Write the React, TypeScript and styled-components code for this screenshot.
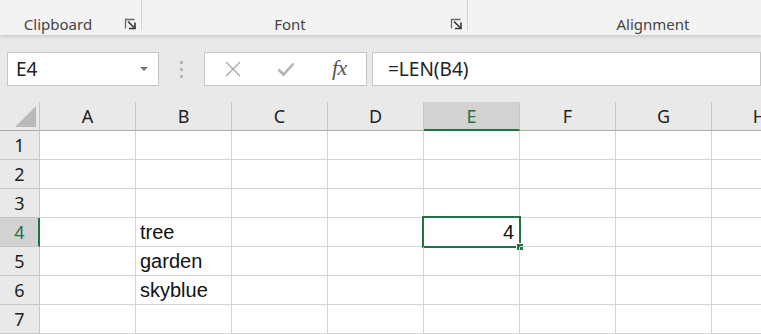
import React from "react";
import styled, { createGlobalStyle } from "styled-components";

const GlobalStyle = createGlobalStyle`
  html, body {
    margin: 0;
    padding: 0;
    background: #ffffff;
    overflow: hidden;
  }
  body {
    font-family: "Noto Sans", "Open Sans", sans-serif;
  }
`;

const green = "#217346";

const Page = styled.div`
  width: 761px;
  height: 334px;
  overflow: hidden;
  display: flex;
  flex-direction: column;
  background: #e9e9e9;
`;

const Ribbon = styled.div`
  height: 35px;
  flex: none;
  display: flex;
  background: #f3f3f3;
  box-shadow: 0 1px 4px rgba(0, 0, 0, 0.18);
  position: relative;
  z-index: 1;
`;

const Group = styled.div<{ $w: number; $pad?: number }>`
  width: ${(p) => p.$w}px;
  flex: none;
  display: flex;
  align-items: flex-start;
  justify-content: center;
  padding: 14px ${(p) => p.$pad ?? 0}px 0 0;
  box-sizing: border-box;
  height: 35px;
  position: relative;
  &::after {
    content: "";
    position: absolute;
    right: 0;
    top: 0;
    width: 1px;
    height: 30px;
    background: #d2d2d2;
  }
  &:last-child::after {
    display: none;
  }
`;

const GroupLabel = styled.span`
  font-size: 15px;
  color: #444;
  line-height: 20px;
`;

const Launcher = styled.span`
  position: absolute;
  right: 5px;
  top: 18px;
  width: 13px;
  height: 12px;
  display: flex;
`;

const FormulaArea = styled.div`
  height: 67px;
  flex: none;
  box-sizing: border-box;
  padding: 17px 0 0 7px;
  display: flex;
  align-items: flex-start;
  background: #e9e9e9;
`;

const Box = styled.div<{ $w?: number }>`
  height: 34px;
  box-sizing: border-box;
  background: #fff;
  border: 1px solid #c6c6c6;
  display: flex;
  align-items: center;
  ${(p) => (p.$w ? `width: ${p.$w}px; flex: none;` : "flex: 1;")}
`;

const NameText = styled.span`
  flex: 1;
  padding-left: 8px;
  font-size: 19px;
  color: #222;
`;

const Caret = styled.span`
  width: 0;
  height: 0;
  border-left: 4px solid transparent;
  border-right: 4px solid transparent;
  border-top: 4px solid #777;
  margin-right: 10px;
`;

const Dots = styled.div`
  width: 45px;
  flex: none;
  height: 34px;
  display: flex;
  flex-direction: column;
  align-items: center;
  justify-content: center;
  gap: 4px;
`;

const Dot = styled.span`
  width: 3px;
  height: 3px;
  background: #b8b8b8;
`;

const IconSlot = styled.span<{ $shift?: number }>`
  width: 54px;
  display: flex;
  justify-content: center;
  align-items: center;
  margin-left: ${(p) => p.$shift ?? 0}px;
`;

const Fx = styled.span`
  font-family: "Liberation Serif", "DejaVu Serif", serif;
  font-style: italic;
  font-size: 22px;
  color: #555;
  letter-spacing: -0.5px;
  margin-top: -3px;
`;

const FormulaText = styled.span`
  padding-left: 15px;
  font-size: 19px;
  color: #222;
`;

const Sheet = styled.div`
  flex: 1;
  display: grid;
  grid-template-columns: 40px repeat(8, 96px);
  grid-auto-rows: 29px;
  background: #fff;
  overflow: hidden;
`;

const ColHead = styled.div<{ $sel?: boolean }>`
  box-sizing: border-box;
  background: ${(p) => (p.$sel ? "#d2d2d2" : "#e9e9e9")};
  border-right: 1px solid #c6c6c6;
  border-bottom: ${(p) => (p.$sel ? `2px solid ${green}` : "1px solid #ababab")};
  color: ${(p) => (p.$sel ? green : "#222")};
  font-size: 18px;
  display: flex;
  align-items: center;
  justify-content: center;
  padding-top: ${(p) => (p.$sel ? 1 : 0)}px;
`;

const Corner = styled.div`
  box-sizing: border-box;
  background: #e9e9e9;
  border-right: 1px solid #c6c6c6;
  border-bottom: 1px solid #ababab;
  display: flex;
  align-items: flex-end;
  justify-content: flex-end;
  padding: 0 3px 3px 0;
`;

const RowHead = styled.div<{ $sel?: boolean }>`
  box-sizing: border-box;
  background: ${(p) => (p.$sel ? "#d2d2d2" : "#e9e9e9")};
  border-right: ${(p) => (p.$sel ? `2px solid ${green}` : "1px solid #c6c6c6")};
  border-bottom: 1px solid #c6c6c6;
  color: ${(p) => (p.$sel ? green : "#222")};
  font-size: 18px;
  display: flex;
  align-items: center;
  justify-content: center;
  padding-left: ${(p) => (p.$sel ? 1 : 0)}px;
`;

const Cell = styled.div<{ $num?: boolean }>`
  box-sizing: border-box;
  border-right: 1px solid #d4d4d4;
  border-bottom: 1px solid #d4d4d4;
  font-family: "Liberation Sans", Arial, sans-serif;
  font-size: 20px;
  color: #111;
  display: flex;
  align-items: flex-end;
  justify-content: ${(p) => (p.$num ? "flex-end" : "flex-start")};
  padding: 0 ${(p) => (p.$num ? 5 : 4)}px 2px 4px;
  position: relative;
  white-space: nowrap;
`;

const Selection = styled.span`
  position: absolute;
  left: -2px;
  top: -2px;
  right: -2px;
  bottom: -2px;
  border: 2px solid ${green};
  pointer-events: none;
`;

const Handle = styled.span`
  position: absolute;
  right: -5px;
  bottom: -5px;
  width: 6px;
  height: 6px;
  background: ${green};
  border: 1px solid #fff;
`;

const columns = ["A", "B", "C", "D", "E", "F", "G", "H"];

const data: Record<string, string> = {
  B4: "tree",
  B5: "garden",
  B6: "skyblue",
  E4: "4",
};

const LauncherIcon = () => (
  <Launcher>
    <svg width="13" height="12" viewBox="0 0 13 12">
      <path d="M1.5 10.5 V1.5 H10.5" stroke="#666" strokeWidth="1.3" fill="none" />
      <path d="M4 3.5 L10 9.5" stroke="#333" strokeWidth="1.6" />
      <path d="M5 10.5 H11 V4.5" stroke="#333" strokeWidth="1.6" fill="none" />
    </svg>
  </Launcher>
);

const App = () => {
  return (
    <Page>
      <GlobalStyle />
      <Ribbon>
        <Group $w={142} $pad={26}>
          <GroupLabel>Clipboard</GroupLabel>
          <LauncherIcon />
        </Group>
        <Group $w={326} $pad={30}>
          <GroupLabel>Font</GroupLabel>
          <LauncherIcon />
        </Group>
        <Group $w={380} $pad={10}>
          <GroupLabel>Alignment</GroupLabel>
        </Group>
      </Ribbon>
      <FormulaArea>
        <Box $w={152}>
          <NameText>E4</NameText>
          <Caret />
        </Box>
        <Dots>
          <Dot />
          <Dot />
          <Dot />
        </Dots>
        <Box $w={163}>
          <IconSlot $shift={1}>
            <svg width="18" height="16" viewBox="0 0 18 16">
              <path d="M2 1 L16 15 M16 1 L2 15" stroke="#a9a9a9" strokeWidth="1.4" />
            </svg>
          </IconSlot>
          <IconSlot>
            <svg width="18" height="16" viewBox="0 0 18 16">
              <path d="M1.5 8.5 L6.5 13.5 L16.5 2.5" stroke="#b3b3b3" strokeWidth="2.6" fill="none" />
            </svg>
          </IconSlot>
          <IconSlot>
            <Fx>fx</Fx>
          </IconSlot>
        </Box>
        <Box style={{ marginLeft: 5 }}>
          <FormulaText>=LEN(B4)</FormulaText>
        </Box>
      </FormulaArea>
      <Sheet>
        <Corner>
          <svg width="21" height="21" viewBox="0 0 21 21">
            <path d="M21 0 V21 H0 Z" fill="#b9b9b9" />
          </svg>
        </Corner>
        {columns.map((c) => (
          <ColHead key={c} $sel={c === "E"}>
            {c}
          </ColHead>
        ))}
        {[1, 2, 3, 4, 5, 6, 7].map((r) => (
          <React.Fragment key={r}>
            <RowHead $sel={r === 4}>{r}</RowHead>
            {columns.map((c) => {
              const id = `${c}${r}`;
              const value = data[id];
              const isNum = value !== undefined && !isNaN(Number(value));
              return (
                <Cell key={id} $num={isNum}>
                  {value}
                  {id === "E4" && (
                    <Selection>
                      <Handle />
                    </Selection>
                  )}
                </Cell>
              );
            })}
          </React.Fragment>
        ))}
      </Sheet>
    </Page>
  );
};

export default App;
